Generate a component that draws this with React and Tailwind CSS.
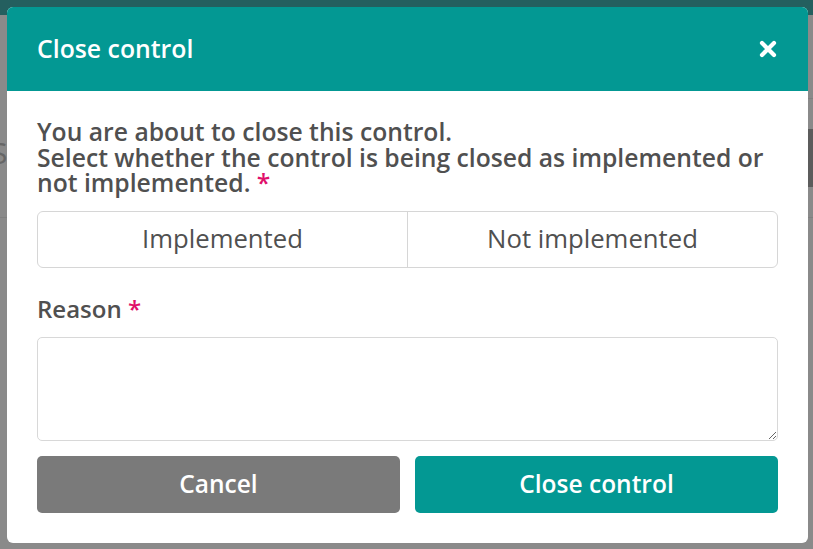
import { useState } from "react";

const CloseIcon = () => (
  <svg width="18" height="18" viewBox="0 0 18 18" fill="none">
    <path d="M3 3 L15 15 M15 3 L3 15" stroke="white" strokeWidth="4.2" strokeLinecap="round" />
  </svg>
);

const Backdrop = () => (
  <div className="absolute inset-0 bg-[#8a8a8a]">
    <div className="h-[15px] bg-[#245f5f]" />
    <div className="absolute left-0 right-0 top-[217px] h-px bg-[#808080]" />
    <div className="absolute right-0 top-[98px] w-[5px] h-px bg-[#808080]" />
    <div className="absolute right-0 top-[129px] w-[5px] h-[58px] bg-[#5c5c5c]" />
    <div className="absolute left-[-9px] top-[138px] text-[30px] leading-none text-[#666]">S</div>
  </div>
);

export default function App() {
  const [choice, setChoice] = useState(null);
  const [reason, setReason] = useState("");

  return (
    <div className="relative h-[549px] w-full overflow-hidden" style={{ fontFamily: "'Open Sans', 'Liberation Sans', sans-serif" }}>
      <Backdrop />

      <div className="absolute left-[7px] top-[7px] w-[801px] rounded-md bg-white overflow-hidden">
        <div className="h-[84px] bg-[#039893] flex items-center justify-between pl-[30px] pr-[31px]">
          <h1 className="text-[24.8px] font-semibold text-white">Close control</h1>
          <button className="flex items-center justify-center">
            <CloseIcon />
          </button>
        </div>

        <div className="px-[30px] pt-[28px] pb-[30px] text-[#505050]">
          <p className="text-[24.7px] font-semibold leading-[25.5px]">
            You are about to close this control.
            <br />
            Select whether the control is being closed as implemented or not implemented. <span className="text-[#e0106b]">*</span>
          </p>

          <div className="mt-[15px] flex h-[57px] rounded-md border border-[#d6d6d6]">
            <button
              onClick={() => setChoice("yes")}
              className={`flex-1 text-[25.7px] font-medium text-[#505050] border-r border-[#d6d6d6] ${choice === "yes" ? "bg-gray-100" : ""}`}
            >
              Implemented
            </button>
            <button
              onClick={() => setChoice("no")}
              className={`flex-1 text-[25.7px] font-medium text-[#505050] ${choice === "no" ? "bg-gray-100" : ""}`}
            >
              Not implemented
            </button>
          </div>

          <label className="block mt-[28px] text-[24px] font-semibold leading-[25px]">
            Reason <span className="text-[#e0106b]">*</span>
          </label>

          <textarea
            value={reason}
            onChange={(e) => setReason(e.target.value)}
            className="mt-[16px] block w-full h-[104px] rounded-[5px] border border-[#d8d8d8] outline-none px-3 py-2 text-[18px]"
          />

          <div className="mt-[15px] flex gap-[15px]">
            <button className="flex-1 h-[57px] rounded-[5px] bg-[#7a7a7a] text-white text-[24.5px] font-semibold">
              Cancel
            </button>
            <button className="flex-1 h-[57px] rounded-[5px] bg-[#039893] text-white text-[24.5px] font-semibold">
              Close control
            </button>
          </div>
        </div>
      </div>
    </div>
  );
}
